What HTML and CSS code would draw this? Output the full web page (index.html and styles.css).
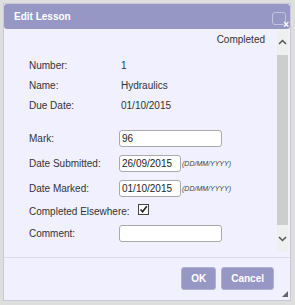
FILE: index.html
```html
<!DOCTYPE html>
<html lang="en">
<head>
    <meta charset="UTF-8">
    <title>Edit Lesson</title>
    <link rel="stylesheet" href="styles.css">
</head>
<body>

<div class="dialog">
    <div class="titlebar">
        <span class="title">Edit Lesson</span>
        <span class="close"><span class="close-x">&times;</span></span>
    </div>

    <div class="body">
        <div class="content">
            <div class="status">Completed</div>

            <div class="row info"><span class="label">Number:</span><span class="value">1</span></div>
            <div class="row info"><span class="label">Name:</span><span class="value">Hydraulics</span></div>
            <div class="row info"><span class="label">Due Date:</span><span class="value">01/10/2015</span></div>

            <div class="row field first">
                <span class="label">Mark:</span>
                <input type="text" class="wide" value="96">
            </div>
            <div class="row field">
                <span class="label">Date Submitted:</span>
                <input type="text" class="date" value="26/09/2015">
                <span class="hint">(DD/MM/YYYY)</span>
            </div>
            <div class="row field">
                <span class="label">Date Marked:</span>
                <input type="text" class="date" value="01/10/2015">
                <span class="hint">(DD/MM/YYYY)</span>
            </div>
            <div class="row check">
                <span class="label-free">Completed Elsewhere:</span>
                <span class="checkbox">
                    <svg width="9" height="9" viewBox="0 0 9 9"><path d="M1.5 4.5 L3.6 6.8 L7.8 1.2" fill="none" stroke="#222" stroke-width="1.6"/></svg>
                </span>
            </div>
            <div class="row field">
                <span class="label">Comment:</span>
                <input type="text" class="wide" value="">
            </div>
        </div>

        <div class="scrollbar">
            <div class="arrow up">
                <svg width="9" height="6" viewBox="0 0 9 6"><path d="M1 5 L4.5 1.5 L8 5" fill="none" stroke="#555" stroke-width="1.5"/></svg>
            </div>
            <div class="thumb"></div>
            <div class="arrow down">
                <svg width="9" height="6" viewBox="0 0 9 6"><path d="M1 1 L4.5 4.5 L8 1" fill="none" stroke="#555" stroke-width="1.5"/></svg>
            </div>
        </div>
    </div>

    <div class="buttons">
        <button type="button">OK</button>
        <button type="button">Cancel</button>
        <svg class="grip" width="6" height="6" viewBox="0 0 6 6"><path d="M6 0 L6 6 L0 6 Z" fill="#666"/></svg>
    </div>
</div>

</body>
</html>
```

FILE: styles.css
```css
body {
    margin: 0;
    padding: 0;
    background-color: #dedede;
    font-family: "Liberation Sans", Arial, sans-serif;
    font-size: 10px;
    color: #333;
}
.dialog {
    position: relative;
    width: 286px;
    margin: 3px 0 0 3px;
    background: #f0f0ff;
    border: 1px solid #c9c9d4;
}
.titlebar {
    display: flex;
    align-items: center;
    justify-content: space-between;
    height: 25px;
    padding: 0 4px 0 10px;
    background: #9797c5;
    border-radius: 3px;
    color: #fff;
}
.title {
    font-weight: bold;
    font-size: 10px;
}
.close {
    position: relative;
    width: 12px;
    height: 11px;
    margin-top: 4px;
    border: 1px solid #c4c4dc;
    border-radius: 3px;
}
.close-x {
    position: absolute;
    right: -4px;
    bottom: -5px;
    font-size: 10px;
    font-weight: bold;
    line-height: 8px;
    color: #fff;
}
.body {
    display: flex;
    height: 223px;
}
.content {
    flex: 1;
    padding: 5px 12px 0 25px;
    overflow: hidden;
}
.status {
    text-align: right;
    line-height: 12px;
    margin-bottom: 9px;
}
.row {
    display: flex;
    align-items: center;
}
.info {
    height: 20px;
}
.field {
    height: 25px;
}
.field.first {
    margin-top: 11px;
}
.check {
    height: 20px;
}
.label {
    width: 90px;
}
.value {
    padding-left: 2px;
}
.label-free {
    margin-right: 8px;
}
input {
    box-sizing: border-box;
    height: 17px;
    padding: 0 2px;
    border: 1px solid #aaa;
    border-radius: 3px;
    background: #fff;
    font-family: "Liberation Sans", Arial, sans-serif;
    font-size: 10px;
    color: #222;
}
.wide {
    width: 103px;
}
.date {
    width: 62px;
}
.hint {
    margin-left: 1px;
    font-size: 7px;
    font-style: italic;
    color: #444;
}
.checkbox {
    display: flex;
    align-items: center;
    justify-content: center;
    box-sizing: border-box;
    width: 11px;
    height: 11px;
    margin-top: -3px;
    border: 1px solid #444;
    background: #fff;
}
.scrollbar {
    display: flex;
    flex-direction: column;
    width: 11px;
    margin-right: 2px;
    background: #efefef;
}
.arrow {
    display: flex;
    align-items: center;
    justify-content: center;
}
.arrow.up {
    height: 26px;
}
.arrow.down {
    height: 27px;
}
.thumb {
    flex: 1;
    background: #cdcdcd;
}
.buttons {
    display: flex;
    justify-content: flex-end;
    gap: 5px;
    margin-top: 5px;
    padding: 9px 16px 10px 0;
    border-top: 1px solid #dcdce4;
}
button {
    height: 23px;
    padding: 0 9px;
    background: #9797c5;
    border: 1px solid #b0b0d0;
    border-radius: 3px;
    color: #fff;
    font-family: "Liberation Sans", Arial, sans-serif;
    font-size: 10px;
    font-weight: bold;
}
.grip {
    position: absolute;
    right: 2px;
    bottom: 3px;
}
```
